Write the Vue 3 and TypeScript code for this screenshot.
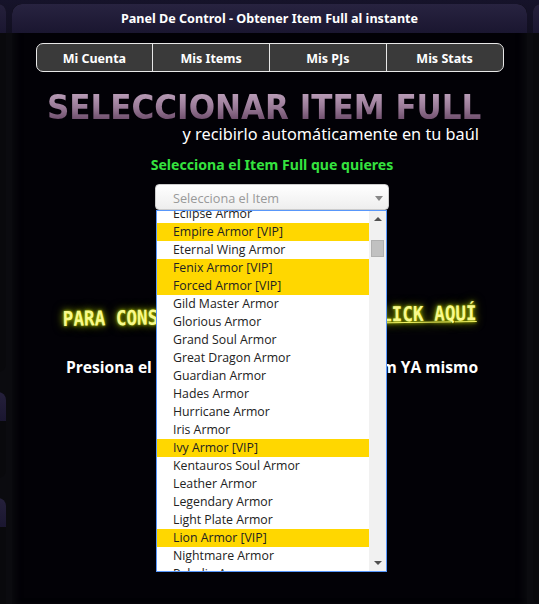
<script setup lang="ts">
interface Item {
  name: string
  vip?: boolean
}

const tabs = ['Mi Cuenta', 'Mis Items', 'Mis PJs', 'Mis Stats']

const items: Item[] = [
  { name: 'Eclipse Armor' },
  { name: 'Empire Armor [VIP]', vip: true },
  { name: 'Eternal Wing Armor' },
  { name: 'Fenix Armor [VIP]', vip: true },
  { name: 'Forced Armor [VIP]', vip: true },
  { name: 'Gild Master Armor' },
  { name: 'Glorious Armor' },
  { name: 'Grand Soul Armor' },
  { name: 'Great Dragon Armor' },
  { name: 'Guardian Armor' },
  { name: 'Hades Armor' },
  { name: 'Hurricane Armor' },
  { name: 'Iris Armor' },
  { name: 'Ivy Armor [VIP]', vip: true },
  { name: 'Kentauros Soul Armor' },
  { name: 'Leather Armor' },
  { name: 'Legendary Armor' },
  { name: 'Light Plate Armor' },
  { name: 'Lion Armor [VIP]', vip: true },
  { name: 'Nightmare Armor' },
  { name: 'Paladin Armor' }
]
</script>

<template>
  <div class="page">
    <aside class="side side-left">
      <div class="side-box box-a"><div class="side-head"></div></div>
      <div class="side-box box-b"><div class="side-head"></div></div>
      <div class="side-box box-c"><div class="side-head"></div></div>
    </aside>

    <main class="panel">
      <header class="panel-head">Panel De Control - Obtener Item Full al instante</header>
      <div class="panel-body">
        <nav class="tabs">
          <a v-for="tab in tabs" :key="tab" class="tab">{{ tab }}</a>
        </nav>

        <h1 class="banner">SELECCIONAR ITEM FULL</h1>
        <p class="subtitle">y recibirlo automáticamente en tu baúl</p>
        <h2 class="pick">Selecciona el Item Full que quieres</h2>

        <div class="select">
          <div class="select-box">
            <span>Selecciona el Item</span>
            <i class="caret"></i>
          </div>
          <div class="dropdown">
            <ul class="list">
              <li v-for="item in items" :key="item.name" :class="{ vip: item.vip }">{{ item.name }}</li>
            </ul>
            <div class="scrollbar">
              <i class="arrow-up"></i>
              <i class="thumb"></i>
              <i class="arrow-down"></i>
            </div>
          </div>
        </div>

        <p class="neon">PARA CONSULTAS Y/O DUDAS HAZ <a class="neon-link">CLICK AQUÍ</a></p>
        <p class="press">Presiona el botón de abajo y obtén tu Item YA mismo</p>
      </div>
    </main>

    <aside class="side side-right">
      <div class="side-box box-r"><div class="side-head"></div></div>
    </aside>
  </div>
</template>

<style>
html,
body {
  margin: 0;
  height: 100%;
  background: #020106;
  overflow: hidden;
}
</style>

<style scoped>
.page {
  display: flex;
  height: 604px;
  width: 539px;
  overflow: hidden;
  background: linear-gradient(#16132a 0, #110f20 33px, #0b0b0f 33px);
  font-family: "Open Sans", "Noto Sans", sans-serif;
}

.side {
  flex: none;
  width: 6px;
  display: flex;
  flex-direction: column;
}

.side-left {
  align-items: flex-end;
}

.side-box {
  flex: none;
  width: 60px;
  background: #09090c;
  border-radius: 8px;
  overflow: hidden;
}

.side-head {
  height: 29px;
  background: linear-gradient(#25203b, #1a1630);
}

.box-a {
  margin-top: 4px;
  height: 368px;
}

.box-b {
  margin-top: 20px;
  height: 86px;
}

.box-c {
  margin-top: 20px;
  height: 120px;
}

.box-r {
  margin-top: 4px;
  height: 600px;
}

.panel {
  flex: none;
  width: 515px;
  margin: 4px 6px 0;
  border-radius: 10px 10px 0 0;
  background: #020106;
  box-shadow: inset 6px 0 6px -2px #0a0a0e, inset -6px 0 6px -2px #0a0a0e;
}

.panel-head {
  height: 29px;
  line-height: 30px;
  text-align: center;
  font-family: "Noto Sans", sans-serif;
  font-size: 12.6px;
  font-weight: 700;
  color: #fff;
  border-radius: 10px 10px 0 0;
  background: linear-gradient(#282340, #1a1630);
}

.panel-body {
  display: flex;
  flex-direction: column;
  align-items: center;
  padding-top: 10px;
}

.tabs {
  display: flex;
  width: 466px;
  height: 27px;
  border: 1px solid #e8e8e8;
  border-radius: 7px;
  background: #3a3a3a;
  overflow: hidden;
}

.tab {
  flex: 1;
  line-height: 29px;
  text-align: center;
  font-family: "Noto Sans", sans-serif;
  font-size: 12.5px;
  font-weight: 700;
  color: #fff;
}

.tab + .tab {
  border-left: 1px solid #e8e8e8;
}

.banner {
  align-self: flex-start;
  margin: 17px 0 0 35px;
  font-family: "DejaVu Sans", sans-serif;
  font-size: 34px;
  line-height: 36px;
  font-weight: 700;
  white-space: nowrap;
  transform-origin: left center;
  transform: scaleX(0.913);
  background: linear-gradient(#b79ab5 15%, #9a7b98 50%, #6f4f6d 85%);
  -webkit-background-clip: text;
  background-clip: text;
  color: transparent;
}

.subtitle {
  align-self: flex-end;
  margin: -1px 48px 0 0;
  font-family: "Noto Sans", sans-serif;
  font-size: 16.3px;
  line-height: 20px;
  color: #fff;
  white-space: nowrap;
}

.pick {
  margin: 11px 0 0 5px;
  font-family: "Noto Sans", sans-serif;
  font-size: 14.1px;
  line-height: 20px;
  font-weight: 700;
  color: #35e33f;
}

.select {
  position: relative;
  width: 234px;
  margin-top: 9px;
  margin-left: 5px;
}

.select-box {
  display: flex;
  align-items: center;
  justify-content: space-between;
  box-sizing: border-box;
  height: 26px;
  padding: 2px 6px 0 17px;
  font-size: 12.7px;
  color: #999;
  border: 1px solid #ccc;
  border-radius: 4px;
  background: linear-gradient(#fff, #eee);
}

.caret {
  border: 4px solid transparent;
  border-top: 5px solid #888;
  border-bottom: 0;
  margin-right: -1px;
}

.dropdown {
  position: absolute;
  top: 26px;
  left: 1px;
  z-index: 2;
  display: flex;
  box-sizing: border-box;
  width: 231px;
  height: 362px;
  border: 1px solid #5897fb;
  background: #fff;
  overflow: hidden;
}

.list {
  flex: 1;
  margin: -6px 0 0;
  padding: 0;
  list-style: none;
  font-size: 12.3px;
  color: #222;
}

.list li {
  height: 18px;
  line-height: 18px;
  padding-left: 16px;
  white-space: nowrap;
}

.list li.vip {
  background: #ffd700;
}

.scrollbar {
  position: relative;
  flex: none;
  width: 17px;
  background: #f1f1f1;
}

.arrow-up,
.arrow-down {
  position: absolute;
  left: 5px;
  border: 4px solid transparent;
  border-top: 0;
  border-bottom: 4px solid #505050;
}

.arrow-up {
  top: 6px;
}

.arrow-down {
  bottom: 6px;
  transform: rotate(180deg);
}

.thumb {
  position: absolute;
  top: 29px;
  left: 2px;
  box-sizing: border-box;
  width: 13px;
  height: 17px;
  background: #c1c1c1;
  border: 1px solid #b0b0b0;
}

.neon {
  margin: 94px 0 0;
  font-family: "DejaVu Sans Mono", monospace;
  font-size: 20.5px;
  line-height: 24px;
  font-weight: 700;
  white-space: nowrap;
  color: #f8f98c;
  text-shadow: 0 0 3px #b9d000, 0 0 8px #8aa000, 0 0 12px #4c5a00;
  transform: rotate(-0.8deg) scaleX(0.86);
}

.neon-link {
  text-decoration: underline;
  text-decoration-color: #f0f060;
  text-decoration-thickness: 1px;
}

.press {
  margin: 29px 0 0 5px;
  font-size: 15.6px;
  line-height: 20px;
  font-weight: 700;
  color: #fff;
  white-space: nowrap;
}
</style>
